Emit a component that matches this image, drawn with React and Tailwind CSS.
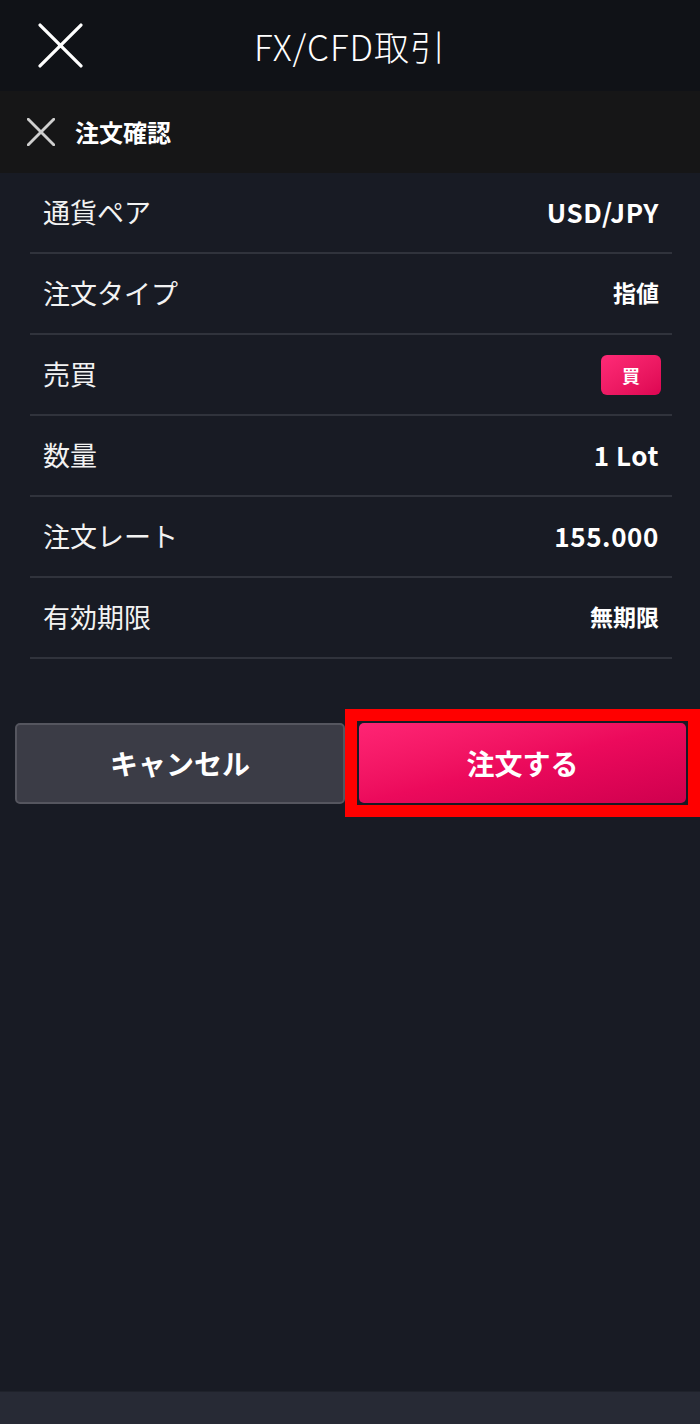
import React from 'react';

const font = { fontFamily: '"Noto Sans CJK JP", "Noto Sans", sans-serif' };

const rows = [
  { label: '通貨ペア', value: 'USD/JPY', latin: true },
  { label: '注文タイプ', value: '指値' },
  { label: '売買', badge: '買' },
  { label: '数量', value: '1 Lot', latin: true },
  { label: '注文レート', value: '155.000', latin: true },
  { label: '有効期限', value: '無期限' },
];

function CloseIcon({ className, stroke = 3 }) {
  return (
    <svg viewBox="0 0 44 44" className={className} fill="none" stroke="currentColor" strokeWidth={stroke} strokeLinecap="round">
      <path d="M2 2L42 42M42 2L2 42" />
    </svg>
  );
}

export default function App() {
  return (
    <div className="w-[700px] h-[1424px] flex flex-col bg-[#181b24] text-white" style={font}>
      {/* top bar */}
      <header className="relative h-[91px] shrink-0 bg-[#101217] flex items-center justify-center">
        <button type="button" className="absolute left-[38px] top-[23px] text-white">
          <CloseIcon className="w-[45px] h-[45px]" stroke={3.2} />
        </button>
        <h1 className="text-[35px] font-light tracking-[1px] leading-none">FX/CFD取引</h1>
      </header>

      {/* sheet title */}
      <div className="h-[82px] shrink-0 bg-[#161617] flex items-center pl-[27px]">
        <CloseIcon className="w-[28px] h-[28px] text-[#cfcfcf]" stroke={4.5} />
        <span className="ml-[20px] text-[24px] font-bold leading-none">注文確認</span>
      </div>

      {/* details */}
      <div className="ml-[30px] mr-[28px]">
        {rows.map((r) => (
          <div key={r.label} className="h-[81px] flex items-center justify-between px-[13px] border-b-2 border-[#30333c]">
            <span className="text-[27px] leading-none text-[#f2f2f2] -mt-[2px]">{r.label}</span>
            {r.badge ? (
              <span className="w-[60px] h-[40px] mr-[-2px] rounded-[6px] bg-gradient-to-br from-[#ff2a77] to-[#dd0452] flex items-center justify-center text-[18px] font-bold leading-none">
                {r.badge}
              </span>
            ) : r.latin ? (
              <span className="text-[26px] font-bold leading-none tracking-[0.6px] -mt-[2px]">{r.value}</span>
            ) : (
              <span className="text-[23px] font-bold leading-none -mt-[2px]">{r.value}</span>
            )}
          </div>
        ))}
      </div>

      {/* actions */}
      <div className="mt-[50px] flex items-center pl-[15px]">
        <button type="button" className="w-[330px] h-[81px] rounded-[5px] bg-[#3b3c46] border-2 border-[#55565f] text-[28px] font-bold">
          キャンセル
        </button>
        <div className="w-[355px] h-[108px] border-[12px] border-[#ff0000] p-[2px] flex">
          <button type="button" className="flex-1 rounded-[5px] bg-gradient-to-br from-[#ff2474] via-[#ec0a5c] to-[#cf004e] text-[28px] font-bold">
            注文する
          </button>
        </div>
      </div>

      <div className="flex-1" />
      <div className="h-[33px] shrink-0 bg-[#272a35] border-t border-[#1f222b]" />
    </div>
  );
}
